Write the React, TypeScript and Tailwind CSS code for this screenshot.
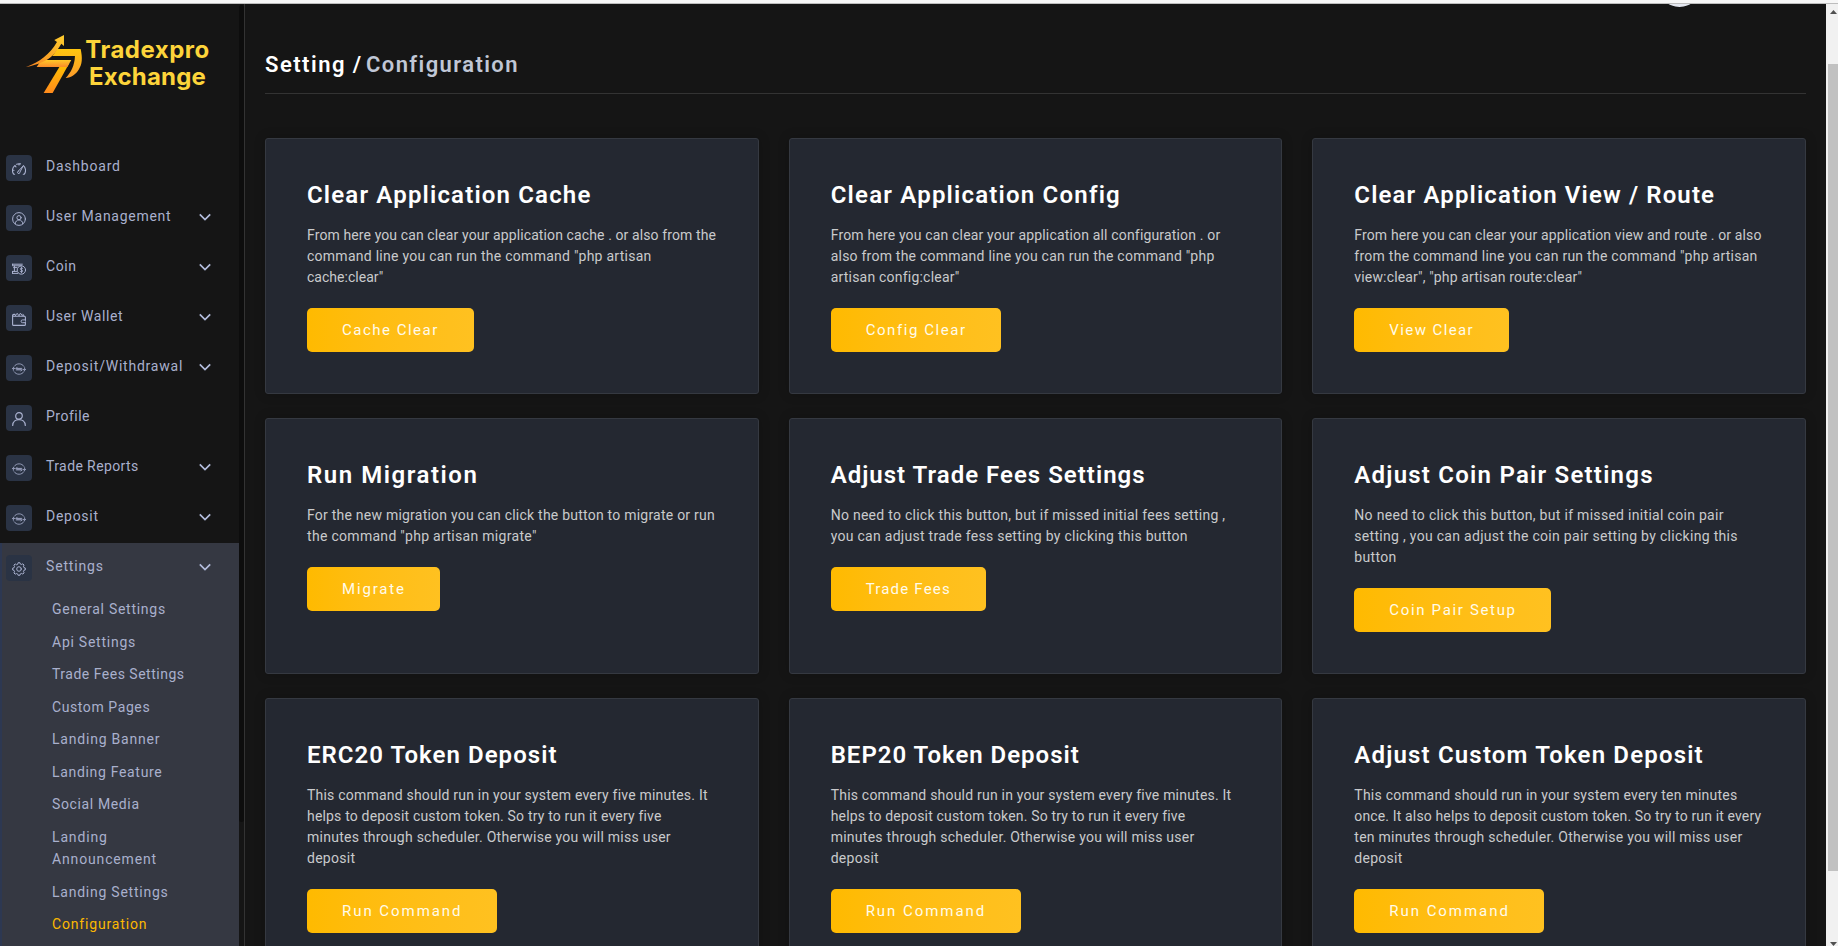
import type { ReactNode } from "react";

type Line = [text: string, tracking: string];

interface CardData {
  title: Line;
  lines: Line[];
  button: Line;
  buttonWidth: string;
}

const cards: CardData[] = [
  {
    title: ["Clear Application Cache", "tracking-[1.17px]"],
    lines: [
      ["From here you can clear your application cache . or also from the", "tracking-[0.11px]"],
      ['command line you can run the command "php artisan', "tracking-[0.26px]"],
      ['cache:clear"', "tracking-[0.02px]"],
    ],
    button: ["Cache Clear", "tracking-[1.5px]"],
    buttonWidth: "w-[167px]",
  },
  {
    title: ["Clear Application Config", "tracking-[1.21px]"],
    lines: [
      ["From here you can clear your application all configuration . or", "tracking-[0.17px]"],
      ['also from the command line you can run the command "php', "tracking-[0.23px]"],
      ['artisan config:clear"', "tracking-[0.21px]"],
    ],
    button: ["Config Clear", "tracking-[1.57px]"],
    buttonWidth: "w-[170px]",
  },
  {
    title: ["Clear Application View / Route", "tracking-[1.13px]"],
    lines: [
      ["From here you can clear your application view and route . or also", "tracking-[0.13px]"],
      ['from the command line you can run the command "php artisan', "tracking-[0.26px]"],
      ['view:clear", "php artisan route:clear"', "tracking-[0.16px]"],
    ],
    button: ["View Clear", "tracking-[1.4px]"],
    buttonWidth: "w-[155px]",
  },
  {
    title: ["Run Migration", "tracking-[1.54px]"],
    lines: [
      ["For the new migration you can click the button to migrate or run", "tracking-[0.23px]"],
      ['the command "php artisan migrate"', "tracking-[0.3px]"],
    ],
    button: ["Migrate", "tracking-[1.85px]"],
    buttonWidth: "w-[133px]",
  },
  {
    title: ["Adjust Trade Fees Settings", "tracking-[1.01px]"],
    lines: [
      ["No need to click this button, but if missed initial fees setting ,", "tracking-[0.27px]"],
      ["you can adjust trade fess setting by clicking this button", "tracking-[0.28px]"],
    ],
    button: ["Trade Fees", "tracking-[1.2px]"],
    buttonWidth: "w-[155px]",
  },
  {
    title: ["Adjust Coin Pair Settings", "tracking-[1.23px]"],
    lines: [
      ["No need to click this button, but if missed initial coin pair", "tracking-[0.3px]"],
      ["setting , you can adjust the coin pair setting by clicking this", "tracking-[0.3px]"],
      ["button", "tracking-[0.3px]"],
    ],
    button: ["Coin Pair Setup", "tracking-[1.66px]"],
    buttonWidth: "w-[197px]",
  },
  {
    title: ["ERC20 Token Deposit", "tracking-[1.04px]"],
    lines: [
      ["This command should run in your system every five minutes. It", "tracking-[0.21px]"],
      ["helps to deposit custom token. So try to run it every five", "tracking-[0.18px]"],
      ["minutes through scheduler. Otherwise you will miss user", "tracking-[0.26px]"],
      ["deposit", "tracking-[0.27px]"],
    ],
    button: ["Run Command", "tracking-[1.95px]"],
    buttonWidth: "w-[190px]",
  },
  {
    title: ["BEP20 Token Deposit", "tracking-[0.98px]"],
    lines: [
      ["This command should run in your system every five minutes. It", "tracking-[0.21px]"],
      ["helps to deposit custom token. So try to run it every five", "tracking-[0.18px]"],
      ["minutes through scheduler. Otherwise you will miss user", "tracking-[0.26px]"],
      ["deposit", "tracking-[0.27px]"],
    ],
    button: ["Run Command", "tracking-[1.95px]"],
    buttonWidth: "w-[190px]",
  },
  {
    title: ["Adjust Custom Token Deposit", "tracking-[1.17px]"],
    lines: [
      ["This command should run in your system every ten minutes", "tracking-[0.24px]"],
      ["once. It also helps to deposit custom token. So try to run it every", "tracking-[0.14px]"],
      ["ten minutes through scheduler. Otherwise you will miss user", "tracking-[0.26px]"],
      ["deposit", "tracking-[0.27px]"],
    ],
    button: ["Run Command", "tracking-[1.95px]"],
    buttonWidth: "w-[190px]",
  },
];

function Glyph({ children }: { children: ReactNode }) {
  return (
    <svg viewBox="0 0 14 14" className="size-3.5 fill-none stroke-[#a9b1cf] stroke-1 [stroke-linecap:round] [stroke-linejoin:round]">
      {children}
    </svg>
  );
}

const GaugeIcon = () => (
  <Glyph>
    <path d="M2.6 12.2h-.9A6.3 6.3 0 0 1 3 3.4M4.6 2.3a6.3 6.3 0 0 1 3.9-.4M11.4 3.7a6.3 6.3 0 0 1 .9 8.5h-1M1 8.2h1M3.2 4l.8.8M7 1.9v1" strokeWidth="1.1" />
    <path d="M6.2 9.3 11 4.1 7.9 10.2a1.2 1.2 0 1 1-1.7-.9Z" />
  </Glyph>
);

const UserCircleIcon = () => (
  <Glyph>
    <circle cx="7" cy="7" r="6.4" />
    <circle cx="7" cy="5.7" r="2.1" />
    <path d="M3.2 11.8c.1-5.3 7.5-5.3 7.6 0" />
  </Glyph>
);

const CoinIcon = () => (
  <Glyph>
    <path d="M.5 2.2h9.8M.5 2.2v1.6h9M1.6 5.6h3.1M2.4 4v5.2M.5 9.4h4.2M.5 11.4h5.4M.5 9.4v2" />
    <circle cx="9.4" cy="8" r="4.2" />
    <path d="M10.7 6.4c-.6-.7-2.4-.6-2.4.5 0 1.3 2.4.8 2.4 2.1 0 1.1-1.8 1.2-2.5.4M9.5 5.2v5.6" strokeWidth=".9" />
  </Glyph>
);

const WalletIcon = () => (
  <Glyph>
    <path d="M.6 3.2v9.2c0 .6.4 1 1 1h10.800c.6 0 1-.4 1-1v-1.700M13.400 8V5.300c0-.6-.4-1-1-1H1.700C.3 4.300.3 2.400 1.700 2.400H3" strokeWidth="1.1" />
    <path d="M3 4 5.200 1.300 7 3.800 8.400 1.200l2.200 2.800M10.900 2.200l1.200 1.900" />
    <path d="M13.500 7.900h-3a1.400 1.400 0 0 0 0 2.800h3Z" />
  </Glyph>
);

const TransferIcon = () => (
  <Glyph>
    <path d="M2.300 4.200a5.700 5.700 0 0 1 9.600.1M11.900 9.700a5.700 5.700 0 0 1-9.700.1M1.400 8.300V5.700M12.600 8.300V5.700" strokeWidth=".8" />
    <path d="M.3 6.900 1.400 5.700l1.300.8M13.700 7.100l-1.100 1.200-1.300-.8" strokeWidth=".9" />
    <path d="M4 6.400h5.800M5.200 5.200 4 6.400M4.200 7.900H10M8.800 9.100 10 7.900M5 7.150h4" strokeWidth=".8" />
  </Glyph>
);

const ProfileIcon = () => (
  <Glyph>
    <circle cx="7" cy="3.900" r="3.300" strokeWidth="1.200" />
    <path d="M.7 13.400c.2-7.700 12.400-7.700 12.600 0" strokeWidth="1.200" />
  </Glyph>
);

const GearIcon = () => (
  <Glyph>
    <circle cx="7" cy="7" r="2.300" />
    <path d="M5.800 1.900 6.100.7h1.800l.3 1.200 1.500.6 1.100-.7 1.300 1.300-.7 1.100.6 1.500 1.300.3v1.900l-1.300.3-.6 1.500.7 1.100-1.300 1.300-1.100-.7-1.500.6-.3 1.300H6.100L5.800 12.100l-1.500-.6-1.100.7-1.300-1.300.7-1.100L2 8.300.7 8V6.100L2 5.800l.6-1.500-.7-1.100 1.300-1.300 1.100.7Z" />
  </Glyph>
);

interface NavItemData {
  label: Line;
  icon: ReactNode;
  expandable: boolean;
}

const navItems: NavItemData[] = [
  { label: ["Dashboard", "tracking-[0.78px]"], icon: <GaugeIcon />, expandable: false },
  { label: ["User Management", "tracking-[0.73px]"], icon: <UserCircleIcon />, expandable: true },
  { label: ["Coin", "tracking-[0.6px]"], icon: <CoinIcon />, expandable: true },
  { label: ["User Wallet", "tracking-[0.6px]"], icon: <WalletIcon />, expandable: true },
  { label: ["Deposit/Withdrawal", "tracking-[0.78px]"], icon: <TransferIcon />, expandable: true },
  { label: ["Profile", "tracking-[0.5px]"], icon: <ProfileIcon />, expandable: false },
  { label: ["Trade Reports", "tracking-[0.4px]"], icon: <TransferIcon />, expandable: true },
  { label: ["Deposit", "tracking-[0.72px]"], icon: <TransferIcon />, expandable: true },
];

const settingsItem: NavItemData = {
  label: ["Settings", "tracking-[0.84px]"],
  icon: <GearIcon />,
  expandable: true,
};

const subItems: Line[] = [
  ["General Settings", "tracking-[0.73px]"],
  ["Api Settings", "tracking-[0.75px]"],
  ["Trade Fees Settings", "tracking-[0.5px]"],
  ["Custom Pages", "tracking-[0.59px]"],
  ["Landing Banner", "tracking-[0.79px]"],
  ["Landing Feature", "tracking-[0.68px]"],
  ["Social Media", "tracking-[0.63px]"],
  ["Landing Announcement", "tracking-[0.85px]"],
  ["Landing Settings", "tracking-[0.76px]"],
  ["Configuration", "tracking-[0.83px]"],
];

function NavItem({ item }: { item: NavItemData }) {
  const [text, tracking] = item.label;
  return (
    <a className="flex h-[50px] items-start pt-3 pr-7 pl-1.5 text-[#a9b0cd]">
      <span className="flex size-[26px] items-center justify-center rounded bg-[#2a3344] pt-0.5">{item.icon}</span>
      <span className={`ml-3.5 flex-1 text-sm leading-[22.5px] whitespace-nowrap ${tracking}`}>{text}</span>
      {item.expandable && (
        <svg viewBox="0 0 12 8" className="mt-2 h-2 w-3 fill-none stroke-[#b3bcdc] stroke-[1.7]">
          <path d="M.8 1.300 6 6.500l5.200-5.200" />
        </svg>
      )}
    </a>
  );
}

function Logo() {
  return (
    <div className="flex h-[139px] shrink-0 items-start pt-[30px] pl-[26px]">
      <svg viewBox="78 102 172 180" className="h-[60px] w-[57.300px]">
        <defs>
          <linearGradient id="arrow" x1="0" y1="1" x2="1" y2="0">
            <stop offset="0" stopColor="#f58220" />
            <stop offset="1" stopColor="#ffce2e" />
          </linearGradient>
          <linearGradient id="dee" x1="0" y1="0" x2="0" y2="1">
            <stop offset="0" stopColor="#ffc60f" />
            <stop offset="1" stopColor="#fb9a2b" />
          </linearGradient>
          <linearGradient id="bar" x1="0" y1="0" x2="0" y2="1">
            <stop offset="0" stopColor="#ffc928" />
            <stop offset="1" stopColor="#fb8c2a" />
          </linearGradient>
          <linearGradient id="stem" x1="0" y1="0" x2="0" y2="1">
            <stop offset="0" stopColor="#ffc400" />
            <stop offset="1" stopColor="#ff8a1c" />
          </linearGradient>
        </defs>
        <path fill="url(#dee)" d="M171 147h71c6 27 5 46-6 62-9 14-22 23-39 25 16-16 27-38 28-66h-68c5-6 10-13 14-21Z" />
        <path fill="url(#stem)" d="M185 190h23l-50 89h-27Z" />
        <path fill="url(#bar)" d="M124 180h90l-12 21h-92Z" />
        <path fill="url(#arrow)" d="M78 201c41-14 71-38 93-75l-8-6 29-15v33l-8-7c-17 29-34 46-56 55-17 8-34 12-50 15Z" />
      </svg>
      <div className="mt-0.5 ml-0.5 flex flex-col items-center font-[Inter,sans-serif] text-2xl leading-[27px] font-bold text-[#fdd43a]">
        <span className="tracking-[0.5px]">Tradexpro</span>
        <span className="tracking-[0.2px]">Exchange</span>
      </div>
    </div>
  );
}

function Sidebar() {
  return (
    <aside className="flex w-[245px] shrink-0 border-r border-[#333]">
      <div className="flex w-[239px] flex-col">
        <Logo />
        <nav className="flex flex-1 flex-col">
          {navItems.map((item) => (
            <NavItem key={item.label[0]} item={item} />
          ))}
          <div className="flex-1 bg-[linear-gradient(to_right,#2d3852_2px,#353842_2px)]">
            <NavItem item={settingsItem} />
            <ul>
              {subItems.map(([text, tracking]) => (
                <li
                  key={text}
                  className={`w-[200px] py-[5px] pl-[52px] text-sm leading-[22.5px] ${tracking} ${
                    text === "Configuration" ? "text-[#fcb900]" : "text-[#a9b0cd]"
                  }`}
                >
                  {text}
                </li>
              ))}
            </ul>
          </div>
        </nav>
      </div>
      <div className="mt-px h-[817px] w-[5px] rounded bg-[#0d0d0d]" />
    </aside>
  );
}

function Card({ card }: { card: CardData }) {
  return (
    <section className="min-h-64 rounded-[3px] border border-[#353941] bg-[#242831] px-[41px] pt-10 pb-10 shadow-[0_0_12px_rgba(0,0,0,0.2)]">
      <h2 className={`text-2xl leading-[33px] font-semibold whitespace-nowrap text-white ${card.title[1]}`}>{card.title[0]}</h2>
      <p className="mt-[13px] text-sm leading-[21px] text-[#c9cacc]">
        {card.lines.map(([text, tracking]) => (
          <span key={text} className={`block whitespace-nowrap ${tracking}`}>
            {text}
          </span>
        ))}
      </p>
      <button
        className={`mt-5 flex h-11 items-center rounded-[5px] bg-linear-to-r from-[#ffba00] to-[#ffc120] pl-[35px] text-[15px] whitespace-nowrap text-[#fffbea] ${card.buttonWidth} ${card.button[1]}`}
      >
        {card.button[0]}
      </button>
    </section>
  );
}

function PageScrollbar() {
  return (
    <div className="flex w-3 shrink-0 flex-col bg-[#f1f1f1]">
      <svg viewBox="0 0 7 4" className="mt-1.5 ml-1 h-1 w-[7px] fill-[#505050]">
        <path d="M0 4 3.500 0 7 4Z" />
      </svg>
      <div className="mt-[50px] ml-0.5 h-[807px] bg-[#c1c1c1]" />
      <svg viewBox="0 0 7 4" className="mt-auto ml-1 h-1 w-[7px] fill-[#505050]">
        <path d="M0 0h7L3.500 4Z" />
      </svg>
    </div>
  );
}

export default function App() {
  return (
    <div className="flex h-[946px] w-full flex-col overflow-hidden bg-[#151515] font-[Roboto,sans-serif]">
      <div className="h-1 shrink-0 border-b border-[#bdbdbd] bg-[#f7f7f7]" />
      <div className="flex min-h-0 flex-1">
        <Sidebar />
        <main className="relative min-w-0 flex-1 overflow-hidden px-5">
          <div className="absolute -top-10 right-[125px] size-[43px] rounded-full bg-[#e3e6ee]" />
          <header className="mb-11 flex h-[90px] items-start border-b border-[#333] pt-[46px] text-[22px] leading-[30px] font-semibold">
            <span className="w-[101px] tracking-[1.480px] whitespace-nowrap text-white">Setting /</span>
            <span className="tracking-[1.400px] text-[#c0c7d6]">Configuration</span>
          </header>
          <div className="grid grid-cols-3 gap-x-[30px] gap-y-6">
            {cards.map((card, index) => (
              <Card key={index} card={card} />
            ))}
          </div>
        </main>
        <PageScrollbar />
      </div>
    </div>
  );
}
